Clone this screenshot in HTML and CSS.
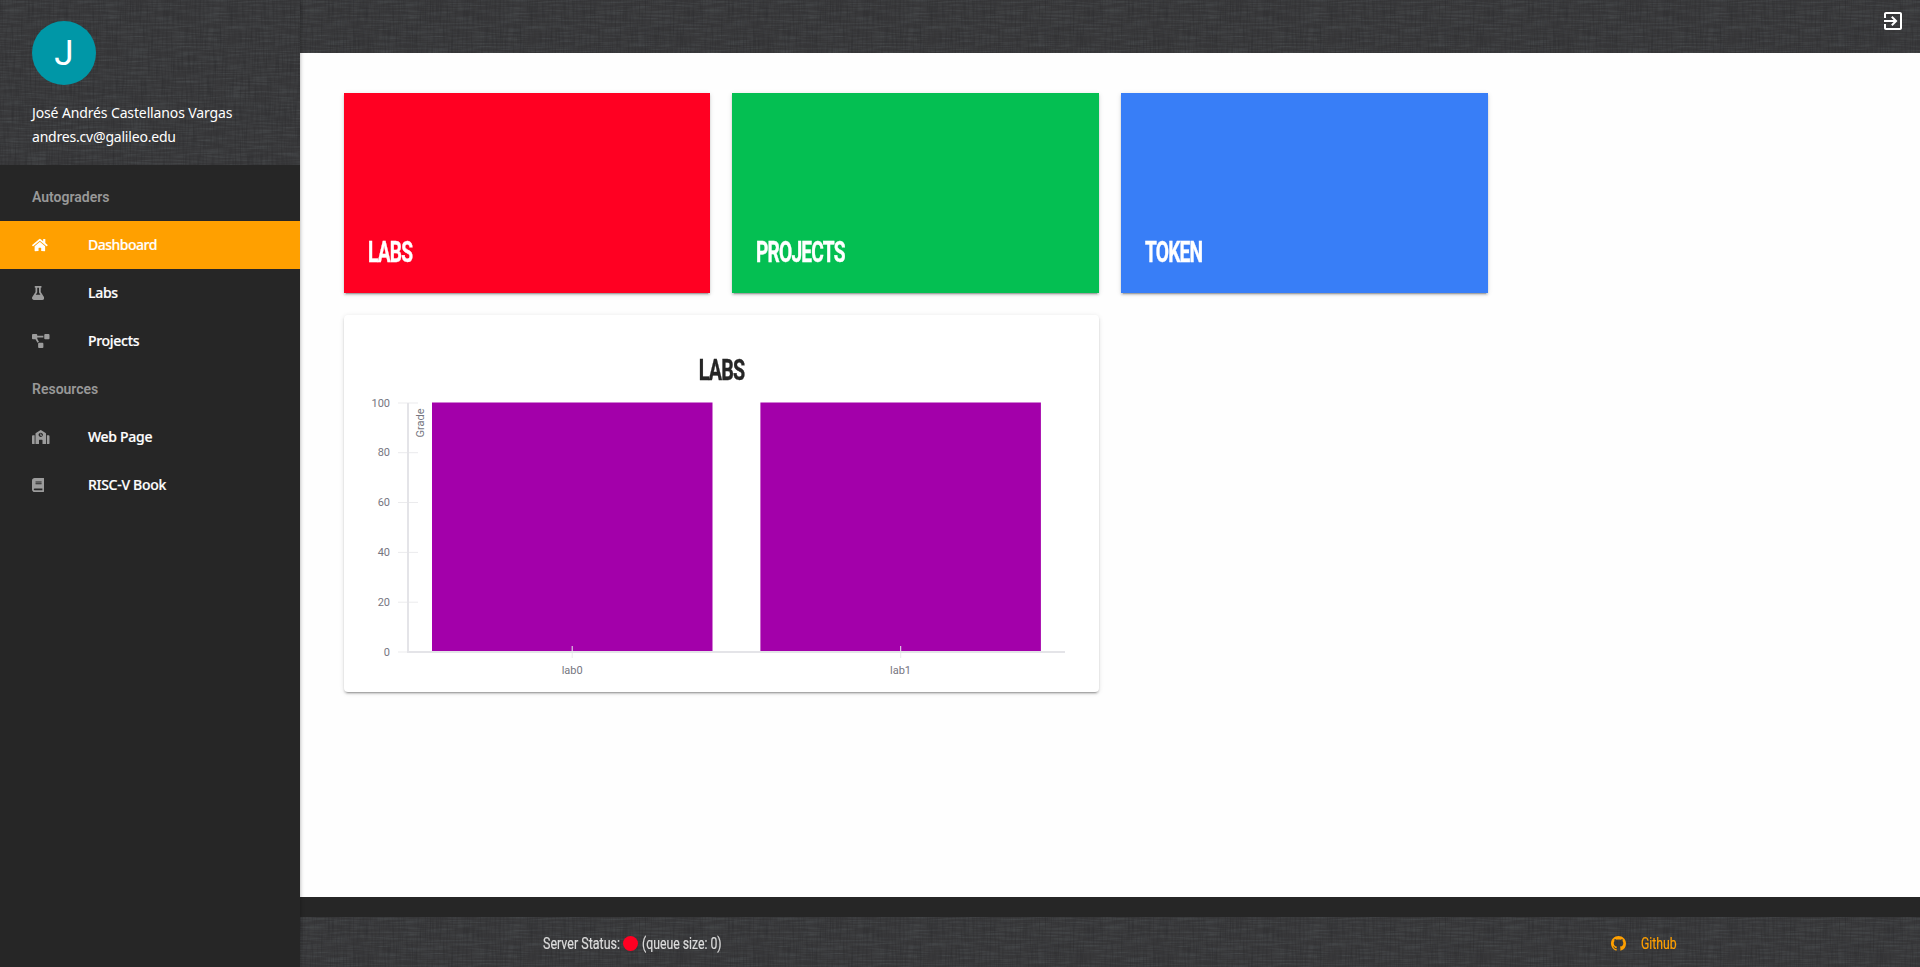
FILE: index.html
```html
<!DOCTYPE html>
<html lang="en">
<head>
<meta charset="utf-8">
<title>Dashboard</title>
<link rel="stylesheet" href="styles.css">
</head>
<body>
<div class="app">
  <aside class="sidebar">
    <div class="profile linen">
      <div class="avatar">J</div>
      <div class="profile-line name">José Andrés Castellanos Vargas</div>
      <div class="profile-line email">andres.cv@galileo.edu</div>
    </div>
    <nav class="nav">
      <div class="nav-title">Autograders</div>
      <a class="nav-item active"><span class="nav-icon"><svg viewBox="0 0 576 512"><path d="M280.37 148.26L96 300.11V464a16 16 0 0 0 16 16l112.06-.29a16 16 0 0 0 15.92-16V368a16 16 0 0 1 16-16h64a16 16 0 0 1 16 16v95.64a16 16 0 0 0 16 16.05L464 480a16 16 0 0 0 16-16V300L295.67 148.26a12.19 12.19 0 0 0-15.3 0zM571.6 251.47L488 182.56V44.05a12 12 0 0 0-12-12h-56a12 12 0 0 0-12 12v72.61L318.47 43a48 48 0 0 0-61 0L4.34 251.47a12 12 0 0 0-1.6 16.9l25.5 31A12 12 0 0 0 45.15 301l235.22-193.74a12.19 12.19 0 0 1 15.3 0L530.9 301a12 12 0 0 0 16.9-1.6l25.5-31a12 12 0 0 0-1.7-16.93z"/></svg></span><span class="tight">Dashboard</span></a>
      <a class="nav-item"><span class="nav-icon"><svg viewBox="0 0 448 512"><path d="M437.2 403.5L320 215V64h8c13.3 0 24-10.7 24-24V24c0-13.3-10.7-24-24-24H120c-13.3 0-24 10.7-24 24v16c0 13.3 10.7 24 24 24h8v151L10.8 403.5C-18.5 450.6 15.3 512 70.9 512h306.2c55.7 0 89.4-61.5 60.1-108.5zM137.9 320l48.2-77.6c3.7-5.2 5.8-11.6 5.8-18.4V64h64v160c0 6.9 2.2 13.2 5.8 18.4l48.2 77.6h-172z"/></svg></span><span>Labs</span></a>
      <a class="nav-item"><span class="nav-icon"><svg viewBox="0 0 640 512"><path d="M384 320H256c-17.67 0-32 14.33-32 32v128c0 17.67 14.33 32 32 32h128c17.67 0 32-14.33 32-32V352c0-17.67-14.33-32-32-32zM192 32c0-17.67-14.33-32-32-32H32C14.33 0 0 14.33 0 32v128c0 17.67 14.33 32 32 32h95.72l73.16 128.04C211.98 300.98 232.4 288 256 288h.28L192 175.51V128h224V64H192V32zM608 0H480c-17.67 0-32 14.33-32 32v128c0 17.67 14.33 32 32 32h128c17.67 0 32-14.33 32-32V32c0-17.67-14.33-32-32-32z"/></svg></span><span>Projects</span></a>
      <div class="nav-title">Resources</div>
      <a class="nav-item"><span class="nav-icon"><svg viewBox="0 0 640 512"><path d="M0 224v272c0 8.84 7.16 16 16 16h80V192H32c-17.67 0-32 14.33-32 32zm360-48h-24v-40c0-4.42-3.58-8-8-8h-16c-4.42 0-8 3.58-8 8v64c0 4.42 3.58 8 8 8h48c4.42 0 8-3.58 8-8v-16c0-4.42-3.58-8-8-8zm137.75-63.96l-160-106.67a32.02 32.02 0 0 0-35.5 0l-160 106.67A32.002 32.002 0 0 0 128 138.66V512h128V368c0-8.84 7.16-16 16-16h96c8.84 0 16 7.16 16 16v144h128V138.67c0-10.7-5.35-20.69-14.25-26.63zM320 256c-44.18 0-80-35.82-80-80s35.82-80 80-80 80 35.82 80 80-35.82 80-80 80zm288-64h-64v320h80c8.84 0 16-7.16 16-16V224c0-17.67-14.33-32-32-32z"/></svg></span><span>Web Page</span></a>
      <a class="nav-item"><span class="nav-icon"><svg viewBox="0 0 448 512"><path d="M448 360V24c0-13.3-10.7-24-24-24H96C43 0 0 43 0 96v320c0 53 43 96 96 96h328c13.3 0 24-10.7 24-24v-16c0-7.5-3.5-14.3-8.9-18.7-4.2-15.4-4.2-59.3 0-74.7 5.4-4.3 8.9-11.1 8.9-18.6zM128 134c0-3.3 2.7-6 6-6h212c3.3 0 6 2.7 6 6v20c0 3.3-2.7 6-6 6H134c-3.3 0-6-2.7-6-6v-20zm0 64c0-3.3 2.7-6 6-6h212c3.3 0 6 2.7 6 6v20c0 3.3-2.7 6-6 6H134c-3.3 0-6-2.7-6-6v-20zm253.4 250H96c-17.7 0-32-14.3-32-32 0-17.6 14.4-32 32-32h285.4c-1.9 17.1-1.9 46.9 0 64z"/></svg></span><span>RISC-V Book</span></a>
    </nav>
  </aside>
  <div class="page">
    <header class="topbar linen">
      <svg class="exit" viewBox="0 0 24 24"><path d="M10.09 15.59L11.5 17l5-5-5-5-1.41 1.41L12.67 11H3v2h9.67l-2.58 2.59zM19 3H5c-1.11 0-2 .9-2 2v4h2V5h14v14H5v-4H3v4c0 1.1.89 2 2 2h14c1.1 0 2-.9 2-2V5c0-1.1-.9-2-2-2z"/></svg>
    </header>
    <main class="content">
      <section class="tile red"><h2 class="heading">LABS</h2></section>
      <section class="tile green"><h2 class="heading">PROJECTS</h2></section>
      <section class="tile blue"><h2 class="heading">TOKEN</h2></section>
      <section class="chart-card">
        <h2 class="heading">LABS</h2>
        <svg class="chart" viewBox="344 392 755 300">
          <g class="bars">
            <rect x="432" y="402.5" width="280.5" height="249.5"/>
            <rect x="760.4" y="402.5" width="280.5" height="249.5"/>
          </g>
          <g class="ticks">
            <path d="M398 403h20M398 452.7h20M398 502.5h20M398 552.4h20M398 602.2h20M398 652h20M572.2 646v12M900.7 646v12"/>
          </g>
          <path class="axis" d="M408 403v249h657"/>
          <g class="y-labels">
            <text x="390" y="407">100</text><text x="390" y="456">80</text><text x="390" y="506">60</text><text x="390" y="556">40</text><text x="390" y="606">20</text><text x="390" y="656">0</text>
            <text transform="translate(424 408.5) rotate(-90)">Grade</text>
          </g>
          <g class="x-labels"><text x="572.2" y="674">lab0</text><text x="900.5" y="674">lab1</text></g>
        </svg>
      </section>
    </main>
    <footer class="footer linen">
      <div class="status">
        <span class="status-label"><span class="narrow">Server Status:</span></span>
        <i class="dot"></i>
        <span class="narrow">(queue size: 0)</span>
      </div>
      <a class="github">
        <svg viewBox="0 0 16 16"><path d="M8 0C3.58 0 0 3.58 0 8c0 3.54 2.29 6.53 5.47 7.59.4.07.55-.17.55-.38 0-.19-.01-.82-.01-1.49-2.01.37-2.53-.49-2.69-.94-.09-.23-.48-.94-.82-1.13-.28-.15-.68-.52-.01-.53.63-.01 1.08.58 1.23.82.72 1.21 1.87.87 2.33.66.07-.52.28-.87.51-1.07-1.78-.2-3.64-.89-3.64-3.95 0-.87.31-1.59.82-2.15-.08-.2-.36-1.02.08-2.12 0 0 .67-.21 2.2.82.64-.18 1.32-.27 2-.27.68 0 1.36.09 2 .27 1.53-1.04 2.2-.82 2.2-.82.44 1.1.16 1.92.08 2.12.51.56.82 1.27.82 2.15 0 3.07-1.87 3.75-3.65 3.95.29.25.54.73.54 1.48 0 1.07-.01 1.93-.01 2.2 0 .21.15.46.55.38A8.013 8.013 0 0 0 16 8c0-4.42-3.58-8-8-8z"/></svg>
        <span class="narrow">Github</span>
      </a>
    </footer>
  </div>
</div>
</body>
</html>
```
FILE: styles.css
```css
* { box-sizing: border-box; }
body { margin: 0; background: #262626; font-family: Roboto, sans-serif; }
.app { display: flex; height: 967px; overflow: hidden; }

.linen {
  background-color: #38383a;
  background-image: url("data:image/svg+xml,%3Csvg xmlns='http://www.w3.org/2000/svg' width='400' height='300'%3E%3Cfilter id='h' x='0' y='0' width='1' height='1' color-interpolation-filters='sRGB'%3E%3CfeTurbulence type='fractalNoise' baseFrequency='.04 .6' numOctaves='2' seed='3' stitchTiles='stitch'/%3E%3CfeColorMatrix values='0 0 0 0 .38 0 0 0 0 .41 0 0 0 0 .42 .7 0 0 0 -.28'/%3E%3C/filter%3E%3Cfilter id='v' x='0' y='0' width='1' height='1' color-interpolation-filters='sRGB'%3E%3CfeTurbulence type='fractalNoise' baseFrequency='.6 .04' numOctaves='2' seed='8' stitchTiles='stitch'/%3E%3CfeColorMatrix values='0 0 0 0 .14 0 0 0 0 .14 0 0 0 0 .15 .8 0 0 0 -.32'/%3E%3C/filter%3E%3Crect width='400' height='300' filter='url(%23h)'/%3E%3Crect width='400' height='300' filter='url(%23v)'/%3E%3C/svg%3E");
}

.sidebar { position: relative; z-index: 1; width: 300px; flex: none; background: #262626; box-shadow: 0 0 4px rgba(0,0,0,.35); }
.profile { height: 165px; padding: 21px 32px 0; color: #fff; }
.avatar { width: 64px; height: 64px; margin-bottom: 16px; border-radius: 50%; background: #0097a7; font-size: 35px; line-height: 66px; text-align: center; }
.profile-line { font: 14px/24px "Noto Sans", sans-serif; white-space: nowrap; }
.name { letter-spacing: -.13px; }
.email { letter-spacing: -.2px; }
.nav { padding-top: 8px; }
.nav-title { height: 48px; padding-left: 32px; color: #989898; font-size: 14px; font-weight: 600; line-height: 48px; }
.nav-item { display: flex; align-items: center; height: 48px; padding-left: 32px; color: #fff; font: 500 14px/48px "Noto Sans", sans-serif; letter-spacing: -.3px; -webkit-text-stroke: .2px #fff; }
.nav-icon { display: flex; width: 56px; fill: #9c9c9c; }
.nav-icon svg { height: 14px; }
.nav-item .tight { letter-spacing: -.5px; }
.nav-item.active { background: #ffa000; }
.active .nav-icon { fill: #fff; }

.page { display: flex; flex: 1; flex-direction: column; min-width: 0; }
.topbar { display: flex; justify-content: flex-end; height: 53px; padding: 9px 15px 0 0; }
.exit { width: 24px; height: 24px; fill: #fff; }
.content { display: grid; flex: 1; grid-template-columns: 366px 367px 367px 1fr; grid-template-rows: 200px 377px; gap: 22px; margin-bottom: 20px; padding: 40px 44px 0; background: #fefefe; }
.tile, .chart-card { box-shadow: 0 3px 1px -2px rgba(0,0,0,.2), 0 2px 2px rgba(0,0,0,.14), 0 1px 5px rgba(0,0,0,.12); }
.tile { display: flex; align-items: flex-end; padding: 0 0 22px 24px; color: #fff; }
.red { background: #ff0022; }
.green { background: #04bf52; }
.blue { background: #387ef7; }
.heading { margin: 0; font: bold 29px/38px Roboto, sans-serif; letter-spacing: -1.2px; -webkit-text-stroke: .4px currentColor; transform: scaleX(.66); transform-origin: left; }
.chart-card { display: flex; flex-direction: column; align-items: center; grid-column: span 2; padding-top: 36px; border-radius: 4px; background: #fff; }
.chart-card .heading { height: 41px; color: #262626; transform: scaleX(.68); transform-origin: center; }
.chart { width: 755px; height: 300px; }
.bars { fill: #a300aa; }
.ticks { fill: none; stroke: #ebebed; stroke-width: 1; }
.axis { fill: none; stroke: #e4e4e8; stroke-width: 2; }
.y-labels, .x-labels { fill: #76767f; font-size: 11px; }
.y-labels { text-anchor: end; }
.x-labels { text-anchor: middle; }

.footer { display: flex; align-items: center; justify-content: space-between; height: 50px; padding: 3px 243px 0; color: #dcdcdc; font: 16px/24px Roboto, sans-serif; }
.status, .github { display: flex; align-items: center; }
.status-label { width: 80px; }
.narrow { display: inline-block; white-space: nowrap; -webkit-text-stroke: .2px currentColor; transform: scaleX(.765); transform-origin: left; }
.status-label .narrow { transform: scaleX(.78); }
.dot { width: 15px; height: 15px; margin-right: 4px; border-radius: 50%; background: #ff0022; }
.github { width: 66px; gap: 15px; color: #ffa000; }
.github svg { flex: none; width: 15px; fill: #ffa000; }
```
